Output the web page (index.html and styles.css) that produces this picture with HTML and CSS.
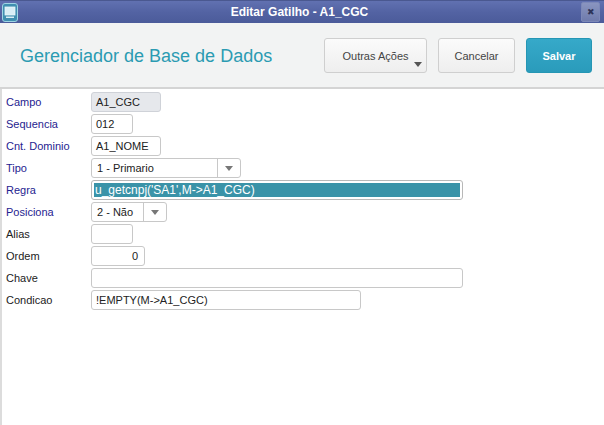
FILE: index.html
```html
<!DOCTYPE html>
<html>
<head>
<meta charset="utf-8">
<link rel="stylesheet" href="styles.css">
</head>
<body>
<div class="window">
  <div class="titlebar">
    <div class="app-icon">
      <svg width="16" height="19" viewBox="0 0 16 19">
        <rect x="0.5" y="0.5" width="15" height="18" rx="2.5" fill="#3f8fb0" stroke="#9fd4e4"/>
        <rect x="3" y="4" width="10" height="8" fill="#d8eef6" stroke="#e8f6fb" stroke-width="0.8"/>
        <rect x="4" y="13.5" width="8" height="1.5" fill="#d8eef6"/>
      </svg>
    </div>
    <div class="title">Editar Gatilho - A1_CGC</div>
    <div class="close">&#x2716;</div>
  </div>
  <div class="header">
    <h1 class="heading">Gerenciador de Base de Dados</h1>
    <div class="actions">
      <button class="btn btn-more">Outras Ações<span class="caret"></span></button>
      <button class="btn btn-cancel">Cancelar</button>
      <button class="btn btn-save">Salvar</button>
    </div>
  </div>
  <div class="form">
    <div class="row"><label class="lbl req">Campo</label><div class="field disabled w70">A1_CGC</div></div>
    <div class="row"><label class="lbl req">Sequencia</label><div class="field w42">012</div></div>
    <div class="row"><label class="lbl req">Cnt. Dominio</label><div class="field w70">A1_NOME</div></div>
    <div class="row"><label class="lbl req">Tipo</label><div class="field select w150"><span class="val">1 - Primario</span><span class="arrow"></span></div></div>
    <div class="row"><label class="lbl req">Regra</label><div class="field w372 focus"><span class="sel">u_getcnpj('SA1',M-&gt;A1_CGC)</span></div></div>
    <div class="row"><label class="lbl req">Posiciona</label><div class="field select w76"><span class="val">2 - Não</span><span class="arrow"></span></div></div>
    <div class="row"><label class="lbl">Alias</label><div class="field w42"></div></div>
    <div class="row"><label class="lbl">Ordem</label><div class="field w54 right">0</div></div>
    <div class="row"><label class="lbl">Chave</label><div class="field w372"></div></div>
    <div class="row"><label class="lbl">Condicao</label><div class="field w270">!EMPTY(M-&gt;A1_CGC)</div></div>
  </div>
</div>
</body>
</html>
```

FILE: styles.css
```css
html, body {
  margin: 0;
  padding: 0;
  background: #ffffff;
}
body {
  font-family: "Liberation Sans", Arial, sans-serif;
  width: 604px;
  height: 425px;
  overflow: hidden;
}
.window {
  display: flex;
  flex-direction: column;
  height: 425px;
  border-left: 2px solid #dcdcdc;
  box-sizing: border-box;
}
.titlebar {
  height: 23px;
  margin-left: -2px;
  display: flex;
  align-items: center;
  background: linear-gradient(#6171b1, #5363a3 50%, #4b5b9a);
  border-top: 1px solid #4a5890;
  box-sizing: border-box;
  padding: 0 4px 0 2px;
}
.app-icon {
  width: 16px;
  height: 19px;
  display: flex;
}
.title {
  flex: 1;
  text-align: center;
  color: #ffffff;
  font-size: 12px;
  font-weight: bold;
}
.close {
  width: 17px;
  height: 18px;
  border: 1px solid #7c88b8;
  border-radius: 2px;
  background: linear-gradient(#8a95c0, #6f7bac);
  color: #2d3358;
  font-size: 9px;
  line-height: 18px;
  text-align: center;
}
.header {
  height: 66px;
  margin-left: -2px;
  background: #f2f3f3;
  border-bottom: 2px solid #d4d4d4;
  display: flex;
  align-items: center;
  justify-content: space-between;
  padding: 0 12px 0 20px;
  box-sizing: border-box;
}
.heading {
  margin: 0;
  font-weight: normal;
  font-size: 18px;
  color: #2b9bb2;
  padding-top: 2px;
}
.actions {
  display: flex;
  gap: 11px;
  align-items: center;
  padding-top: 1px;
}
.btn {
  font-family: "Liberation Sans", Arial, sans-serif;
  font-size: 11px;
  height: 35px;
  border-radius: 3px;
  border: 1px solid #cfcfcf;
  background: linear-gradient(#fbfbfb, #eeeeee);
  color: #444;
  padding: 0;
  position: relative;
}
.btn-more { width: 103px; margin-left: 2px; }
.btn-cancel { width: 77px; }
.btn-save {
  width: 66px;
  border-color: #2596b4;
  background: linear-gradient(#36a9c9, #2a9bbb);
  color: #ffffff;
  font-weight: bold;
}
.caret {
  position: absolute;
  right: 4px;
  bottom: 5px;
  width: 0;
  height: 0;
  border-left: 4px solid transparent;
  border-right: 4px solid transparent;
  border-top: 5px solid #555;
}
.form {
  display: flex;
  flex-direction: column;
  gap: 2px;
  padding: 3px 0 0 4px;
}
.row {
  display: flex;
  align-items: center;
  height: 20px;
}
.lbl {
  width: 85px;
  font-size: 11px;
  color: #222;
}
.lbl.req {
  color: #1f2390;
}
.field {
  height: 20px;
  box-sizing: border-box;
  border: 1px solid #c8c8c8;
  border-radius: 3px;
  background: #fff;
  font-size: 11px;
  color: #222;
  padding: 0 0 0 4px;
  display: flex;
  align-items: center;
}
.field.disabled {
  background: #e6e8ec;
  border-color: #cfd2d8;
}
.w42 { width: 42px; }
.w54 { width: 54px; }
.w70 { width: 70px; }
.w76 { width: 76px; }
.w150 { width: 150px; }
.w270 { width: 270px; }
.w372 { width: 372px; }
.right {
  justify-content: flex-end;
  padding: 0 6px 0 0;
}
.select {
  padding: 0;
}
.select .val {
  flex: 1;
  padding-left: 5px;
}
.select .arrow {
  width: 22px;
  height: 100%;
  border-left: 1px solid #c8c8c8;
  position: relative;
}
.select .arrow::after {
  content: "";
  position: absolute;
  left: 7px;
  top: 7px;
  border-left: 4px solid transparent;
  border-right: 4px solid transparent;
  border-top: 5px solid #777;
}
.focus {
  padding: 2px;
  border-color: #b8b8b8;
}
.sel {
  flex: 1;
  height: 14px;
  background: #3a93a8;
  color: #fff;
  line-height: 14px;
  padding-left: 1px;
  font-size: 12px;
}
```
